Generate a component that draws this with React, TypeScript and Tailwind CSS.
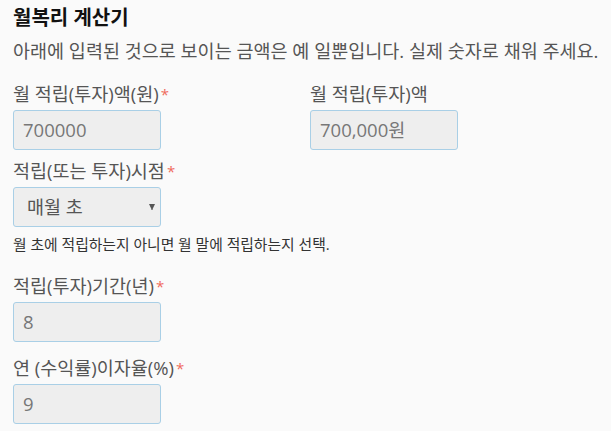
import React from "react";

const font = { fontFamily: '"Open Sans", "Noto Sans CJK KR", sans-serif' };

function Label({ text, req = true }: { text: string; req?: boolean }) {
  return (
    <div className="text-[18.5px] leading-[22px] text-[#555] mb-[5px] whitespace-nowrap">
      {text}
      {req && <span className="text-[15px] text-[#ef6b5c] ml-[2px] align-top">*</span>}
    </div>
  );
}

function Box({ children }: { children: React.ReactNode }) {
  return (
    <div className="w-[148px] h-[40px] bg-[#eeeeee] border border-[#a9cfe6] rounded-[3px] px-[9px] flex items-center text-[18.5px] text-[#777]">
      {children}
    </div>
  );
}

export default function App() {
  return (
    <div className="w-[611px] h-[431px] bg-[#fafafa] overflow-hidden pl-[13px] pt-[5px]" style={font}>
      <div className="text-[20px] leading-[26px] font-bold text-[#111]">월복리 계산기</div>
      <div className="text-[18.5px] leading-[26px] text-[#555] mt-[7px] whitespace-nowrap">
        아래에 입력된 것으로 보이는 금액은 예 일뿐입니다. 실제 숫자로 채워 주세요.
      </div>
      <div className="flex mt-[19px]">
        <div className="w-[297px]">
          <Label text="월 적립(투자)액(원)" />
          <Box>700000</Box>
        </div>
        <div>
          <Label text="월 적립(투자)액" req={false} />
          <Box>700,000원</Box>
        </div>
      </div>
      <div className="mt-[10px]">
        <Label text="적립(또는 투자)시점" />
        <div className="w-[148px] h-[40px] bg-[#eeeeee] border border-[#a9cfe6] rounded-[3px] pl-[13px] pr-[5px] flex items-center justify-between text-[18.5px] text-[#555]">
          <span>매월 초</span>
          <svg width="6" height="6" viewBox="0 0 6 6"><path d="M0 0 L6 0 L3.6 5 L3.6 6 L2.4 6 L2.4 5 Z" fill="#555" /></svg>
        </div>
        <div className="text-[14.8px] leading-[18px] text-[#333] mt-[8px] whitespace-nowrap">
          월 초에 적립하는지 아니면 월 말에 적립하는지 선택.
        </div>
      </div>
      <div className="mt-[22px]">
        <Label text="적립(투자)기간(년)" />
        <Box>8</Box>
      </div>
      <div className="mt-[15px]">
        <Label text="연 (수익률)이자율(%)" />
        <Box>9</Box>
      </div>
    </div>
  );
}
